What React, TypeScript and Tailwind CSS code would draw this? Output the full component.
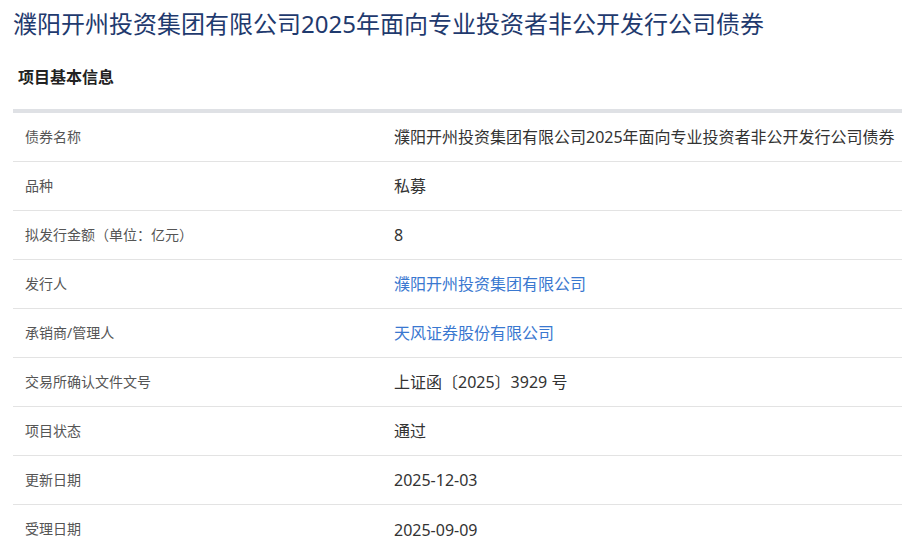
const rows: { label: string; value: string; link?: boolean }[] = [
  { label: "债券名称", value: "濮阳开州投资集团有限公司2025年面向专业投资者非公开发行公司债券" },
  { label: "品种", value: "私募" },
  { label: "拟发行金额（单位：亿元）", value: "8" },
  { label: "发行人", value: "濮阳开州投资集团有限公司", link: true },
  { label: "承销商/管理人", value: "天风证券股份有限公司", link: true },
  { label: "交易所确认文件文号", value: "上证函〔2025〕3929 号" },
  { label: "项目状态", value: "通过" },
  { label: "更新日期", value: "2025-12-03" },
  { label: "受理日期", value: "2025-09-09" },
];

export default function App() {
  return (
    <div
      className="min-h-[560px] bg-white pl-[13px] overflow-hidden"
      style={{ fontFamily: '"Noto Sans", "Noto Sans CJK SC", sans-serif' }}
    >
      {/* Title */}
      <h1 className="pt-2 text-[24px] leading-[32px] text-[#1f3a6e] whitespace-nowrap">
        濮阳开州投资集团有限公司2025年面向专业投资者非公开发行公司债券
      </h1>

      {/* Section heading */}
      <h2 className="pt-[25px] pl-[5px] text-[16px] leading-[24px] font-bold text-[#222]">
        项目基本信息
      </h2>

      <div className="mt-[20px] h-[4px] bg-[#dfe1e5]" />

      {/* Info table */}
      <div>
        {rows.map((r) => (
          <div
            key={r.label}
            className="grid grid-cols-[381px_1fr] h-[49px] border-b border-[#e3e3e3] last:border-b-0"
          >
            <div className="pl-3 pb-[2px] flex items-center text-[14px] text-[#555] whitespace-nowrap">
              {r.label}
            </div>
            <div
              className={`flex items-center text-[16px] whitespace-nowrap ${
                r.link ? "text-[#3a78d0]" : "text-[#333]"
              }`}
            >
              {r.value}
            </div>
          </div>
        ))}
      </div>
    </div>
  );
}
